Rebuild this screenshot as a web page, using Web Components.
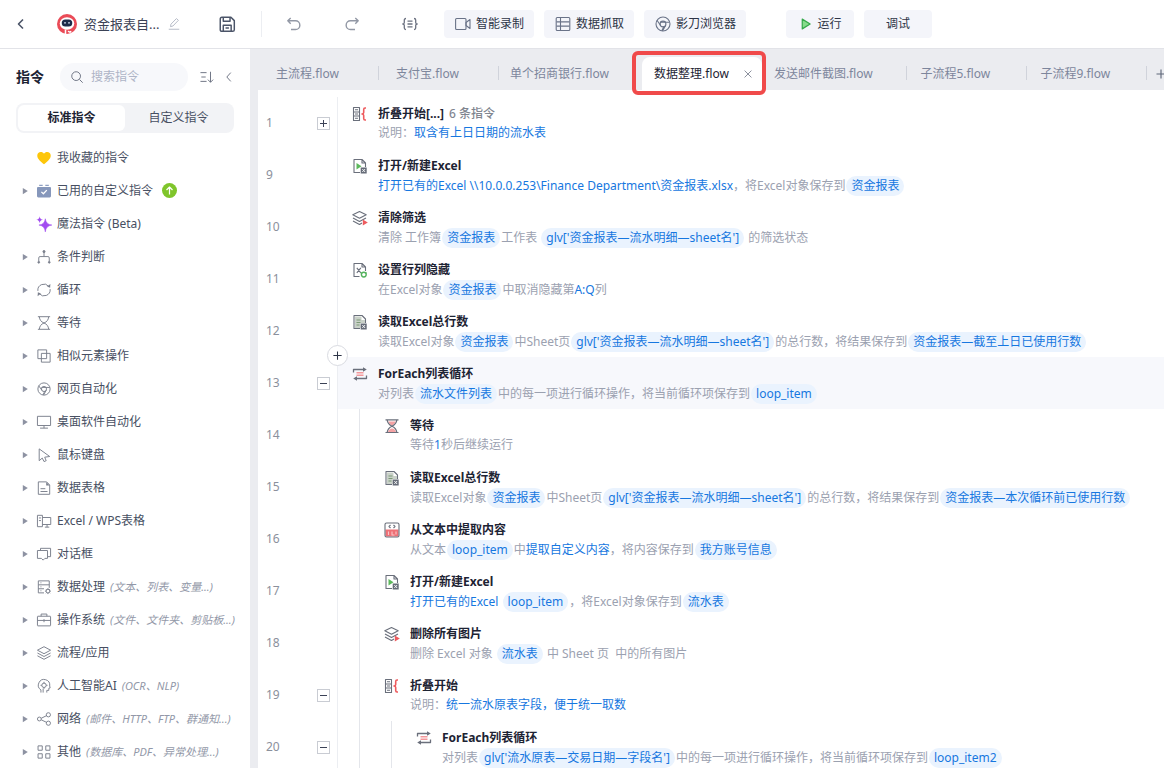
<!DOCTYPE html>
<html lang="zh-CN">
<head>
<meta charset="utf-8">
<meta name="viewport" content="width=device-width, initial-scale=1">
<title>资金报表自动化</title>
<style>
  html, body { height: 100%; }
  body {
    margin: 0;
    font: 12px/18px "Noto Sans", "Noto Sans CJK SC", sans-serif;
    color: #3b4256;
    background: #fff;
    --blue: #1677e0;
    --muted: #9ba1b0;
    --strip: #ebecf0;
    --line: #e6e8ee;
    --soft: #f4f5fa;
  }
</style>
</head>
<body>
<flow-studio></flow-studio>

<script>
const ICONS = {
  back: '<path d="M10 3.5 5.5 8l4.5 4.5" stroke-width="1.6"/>',
  chevron: '<path d="M10 3 5.5 8l4.5 5"/>',
  pencil: '<path d="M4 11 4.500 8.200l6.300-6.400 2.200 2L6.800 10.300zM2 14h12" />',
  save: '<path d="M2 3.500Q2 2 3.500 2h8L14.500 5v8q0 1.500-1.500 1.500H3.500Q2 14.500 2 13zM4.700 2v3.600h6V2M4.700 14.500V9.200h7v5.300M6.700 11.500h3" stroke-width="1.300"/>',
  undo: '<path d="M4.700 2 1.800 4.800l2.900 2.900M2 4.800h7.500a4.300 4.300 0 0 1 0 8.700H5" stroke-width="1.400"/>',
  redo: '<path d="m11.300 2 2.900 2.800-2.900 2.900M14 4.800H6.500a4.300 4.300 0 0 0 0 8.700H11" stroke-width="1.400"/>',
  braces: '<path d="M4 2.500Q2.300 2.500 2.300 4v2.500Q2.300 8 .8 8q1.500 0 1.500 1.500V12q0 1.500 1.700 1.500M12 2.500q1.700 0 1.700 1.500v2.500q0 1.500 1.500 1.500-1.500 0-1.500 1.500V12q0 1.500-1.700 1.500M5.500 5.200h5M5.500 8h5M5.500 10.800h5" stroke-width="1.300"/>',
  camera: '<rect x=".600" y="2.500" width="10.400" height="11" rx="1"/><path d="m11 6.500 4-3v9l-4-3z"/>',
  grid: '<rect x="1.200" y="1.500" width="13.600" height="13" rx="1"/><path d="M5.500 2v12M1.500 5.900h13M1.500 10.100h13"/>',
  chrome: '<circle cx="8" cy="8" r="7"/><circle cx="8" cy="8" r="2.900"/><path d="M5.300 6.200h9.300M5.600 9.500 2 4.300M8.800 10.700l-2 4.100M10.600 9.400 7.500 14.900"/>',
  play: '<path d="M3 1.500v13L13.500 8z" fill="#86dc8b" stroke="#35a94a" stroke-width="1.600"/>',
  search: '<circle cx="7" cy="7" r="5"/><path d="m10.800 10.800 3.700 3.700"/>',
  sort: '<path d="M.5 3h7M1.500 8h5M.5 13h7M12 2v12M9 11l3 3 3-3"/>',
  close: '<path d="m2.500 2.500 11 11M13.500 2.500l-11 11" stroke-width="1.400"/>',
  plus: '<path d="M8 2v12M2 8h12" stroke-width="1.500"/>',
  logo: '<circle cx="8" cy="8" r="8" fill="#ea4b57" stroke="none"/><ellipse cx="8" cy="7.600" rx="5.800" ry="5" fill="#fff" stroke="none"/><rect x="3.800" y="4.400" width="8.400" height="5.600" rx="2.800" fill="#1d2b4a" stroke="none"/><circle cx="6.400" cy="7" r=".7" fill="#d9e4f5" stroke="none"/><circle cx="9.600" cy="7" r=".7" fill="#d9e4f5" stroke="none"/><path d="M6.800 12.300V16M9 13.500q.5 1.500 2.500.5" stroke="#fff" stroke-width="1.200"/>',
  caret: '<path d="M4.500 3v10l8-5z" fill="currentColor" stroke="none"/>',
  up: '<circle cx="8" cy="8" r="8" fill="#7fc52b" stroke="none"/><path d="M8 12.300V4.500M4.800 7.500 8 4.300l3.200 3.200" stroke="#fff" stroke-width="1.300"/>',
  heart: '<path d="M8 15C5 12.500.3 9.200.3 5.300.3 2.600 2.200 1.200 4.200 1.200c1.700 0 3.100.8 3.800 1.900.7-1.100 2.100-1.900 3.800-1.900 2 0 3.900 1.400 3.900 4.100C15.700 9.200 11 12.500 8 15z" fill="#fdc60a" stroke="none"/>',
  box: '<path d="M2.500.8h4v1.400h-4zM9.500.8h4v1.400h-4z" fill="#8fa0c2" stroke="none"/><path d="M0 4.500Q0 3.300 1.200 3.300h13.600Q16 3.300 16 4.500v9.300q0 1.500-1.500 1.500h-13Q0 15.300 0 13.800z" fill="#8697bb" stroke="none"/><path d="m5 9 2.300 2.200L11.200 7" stroke="#fff" stroke-width="1.500"/>',
  magic: '<path d="M9.500 2Q10.200 8.500 17 9.200 10.200 10 9.500 17 8.800 10 2.200 9.200 8.800 8.500 9.500 2z" fill="#a24df0" stroke="#a24df0" stroke-width=".6"/><path d="M3-.8q.4 3.600 4 4Q3.400 3.600 3 7.200 2.600 3.600-1 3.200 2.600 2.800 3-.8z" fill="#a24df0" stroke="none"/>',
  branch: '<path d="M8 2v5.500M2 13V9q0-1.500 1.500-1.500h9q1.500 0 1.500 1.500v4"/><circle cx="8" cy="1.800" r="1.200" fill="currentColor"/><circle cx="2" cy="14" r="1" fill="currentColor"/><circle cx="14" cy="14" r="1" fill="currentColor"/>',
  cycle: '<path d="M1 9A7 7 0 0 1 13.500 4M15 7A7 7 0 0 1 2.500 12"/><path d="m15.300 1-.3 4.500-3.500-1.500zM.7 15l.3-4.500L4.500 12z" fill="currentColor" stroke="none"/>',
  glass: '<path d="M1 .8h14M1 15.200h14M2.700 1Q3 6 8 8q5-2 5.300-7M2.700 15Q3 10 8 8q5 2 5.300 7"/>',
  similar: '<rect x="1" y="1" width="10" height="10"/><rect x="5" y="5" width="10" height="10"/>',
  desktop: '<rect x=".5" y="1.500" width="15" height="10.500"/><path d="M8 12v3M3.500 15h9"/>',
  cursor: '<path d="M2.500 1v13.500l3.500-3 2 4 2.500-1-1.700-4L14.500 9.700z"/>',
  sheet: '<path d="M1.500 1H11L14.500 4.500V15.200h-13zM4 8.800h5.500M4 12h8"/><path d="M10.500 1V5h4z" fill="currentColor" stroke="none"/>',
  wps: '<path d="M.5 1.500h5.700v13H.5zM6.200 4h9.500v8H6.200M2.200 4.500h2.300M2.200 7.500h2.300M9 15h5M11.500 12v3"/>',
  dialog: '<path d="M.5 4h11.500v9H9L7 15 5 13H.5zM4 4v-2.500h11.500v9.500h-3"/>',
  dbgear: '<path d="M8 14.700H1.500V1H14v8M1.500 5.500H14M1.500 10H8M4 3.200h1M4 7.800h1M4 12.300h1"/><circle cx="12.500" cy="12.700" r="2.100"/><path d="M12.500 9.300v1.200M12.500 14.900v1.200M9.100 12.700h1.200M14.700 12.700h1.200M10.100 10.300l.9.900M14 14.200l.9.900M14.900 10.300l-.9.900M11 14.200l-.9.900"/>',
  brief: '<rect x=".5" y="3.700" width="15" height="11" rx=".5"/><path d="M4.700 3.700V1.200h6.600V3.700M.5 8.500h15M8 7v3.500"/>',
  layers: '<path d="m8 .8 7.500 4L8 8.800.5 4.800zM.5 8 8 12l7.500-4M.5 11.200 8 15.200l7.500-4"/>',
  brain: '<path d="M4.500 15.500v-3A6.500 6.500 0 1 1 14.500 8l.5 2.200-1.500.4v2.400h-2.300v2.500"/><circle cx="8" cy="7.200" r="2.500"/><path d="M8 3.200v1.500M8 9.700v1.500M4 7.200h1.500M10.500 7.200H12M7 11v4.500"/>',
  share: '<circle cx="2.700" cy="8" r="2.200"/><circle cx="13" cy="3.200" r="2.400"/><circle cx="13" cy="12.800" r="2.400"/><path d="m4.800 7.200 6-3M4.800 8.900l6 2.900"/>',
  apps: '<rect x="1.200" y="1" width="4.800" height="5"/><rect x="10" y="1" width="4.800" height="5"/><rect x="1.200" y="10" width="4.800" height="5"/><rect x="10" y="10" width="4.800" height="5"/>',
  's-fold': '<path d="M1.500 1.500h6v13h-6zM1.500 6h6M1.500 10h6M3 3.800h3M3 8h3M3 12.200h3"/><path d="M14 2h-1q-1.300 0-1.300 1.500v3Q11.700 8 10 8q1.700 0 1.700 1.500v3q0 1.500 1.300 1.500h1" stroke="#ee5b5e" stroke-width="1.600"/>',
  's-open': '<path d="M8 14.500H2v-13h8L13.500 5v4M10 1.500V5h3.500"/><path d="M4.500 5v6.500L9.500 8.200z" fill="#5cb85c" stroke="none"/><rect x="8.700" y="9.500" width="6" height="6" fill="#666c78" stroke="none"/><path d="m10.300 11 2.800 3M13.100 11l-2.800 3" stroke="#fff" stroke-width=".9"/>',
  's-layers': '<path d="m7.500 1.500 6.700 3.300-6.700 3.400L.8 4.800zM1 8l6.500 3.500L14 8M1 11l6.500 3.500L10 13"/><path d="M10.800 9.500v6L15.800 12.500z" fill="#ee5b5e" stroke="none"/>',
  's-hide': '<path d="M7.500 14.500H2v-13h8L13.500 5v4M10 1.500V5h3.500M4.800 5.800l4 5M8.800 5.800l-4 5"/><circle cx="11.800" cy="12.600" r="2.400" stroke="#55b35e" stroke-width="1.400"/><path d="m8.500 10.500 1.200.8M14.500 10.500l-.8.8" stroke="#55b35e"/>',
  's-read': '<path d="M8 14.500H2v-13h8L13.500 5v4"/><path d="M3 2.500h6.500V6H13v3H8.500v5H3z" fill="#c9d1c8" stroke="none"/><path d="M4.500 6h4M4.500 8.500h4M4.500 11h3" stroke="#7d9a77"/><rect x="8.700" y="9.500" width="6" height="6" fill="#666c78" stroke="none"/><path d="m10.300 11 2.800 3M13.100 11l-2.800 3" stroke="#fff" stroke-width=".9"/>',
  's-loop': '<path d="M1.500 6.500V3.500h10M14.500 9.500v3h-10" stroke-width="1.300"/><path d="M11 1.300v4.400L14.800 3.500zM5 10.300v4.400L1.200 12.500z" fill="currentColor" stroke="none"/><path d="M4.500 6.500h7M4.500 8h7M4.500 9.500h7" stroke="#f3989b" stroke-width="1"/>',
  's-wait': '<path d="M4 3.500h8Q11 6 8 7.500 5 6 4 3.500zM4 14q1-3.500 4-3.500t4 3.500z" fill="#f4a2a4" stroke="none"/><path d="M1.500 1.800h13M1.500 14.500h13M3.200 2Q3.500 6 8 8.200 12.500 6 12.800 2M3.200 14.500Q3.500 10.300 8 8.200q4.500 2.100 4.800 6.300" stroke-width="1.200"/>',
  's-text': '<path d="M1.500 7.500h13V14q0 .5-.5.5H2q-.5 0-.5-.5z" fill="#ef7076" stroke="none"/><rect x="1" y="1" width="14" height="14" rx="1.500"/><path d="M6.500 3 5 4.500 6.500 6M9.500 3 11 4.500 9.500 6"/><path d="M4.500 9.500v3.500M8 9.500v3.500h2.500M12 9.500v3" stroke="#f9c6c8"/>'
};

function define(name, html, setup) {
  const tpl = document.createElement('template');
  tpl.innerHTML = html.trim();
  customElements.define(name, class extends HTMLElement {
    constructor() {
      super();
      this.attachShadow({ mode: 'open' }).append(tpl.content.cloneNode(true));
    }
    connectedCallback() {
      if (setup && !this.ready) { this.ready = true; setup(this, this.shadowRoot); }
    }
  });
}

define('ui-icon', `
<style>
  :host { display: inline-flex; flex: none; width: var(--size, 16px); height: var(--size, 16px); }
  svg { width: 100%; height: 100%; overflow: visible; fill: none; stroke: currentColor; stroke-width: 1.1; stroke-linejoin: round; }
</style>
<svg viewBox="0 0 16 16" aria-hidden="true"></svg>`,
(el, root) => { root.querySelector('svg').innerHTML = ICONS[el.getAttribute('name')] || ''; });

/* Icon-only button */
define('icon-button', `
<style>
  :host { display: inline-flex; flex: none; }
  button { display: flex; margin: 0; padding: 0; border: 0; background: none; color: inherit; cursor: pointer; }
</style>
<button type="button"><ui-icon></ui-icon></button>`,
(el, root) => {
  root.querySelector('button').setAttribute('aria-label', el.getAttribute('label'));
  const icon = document.createElement('ui-icon');
  icon.setAttribute('name', el.getAttribute('icon'));
  root.querySelector('ui-icon').replaceWith(icon);
});

/* Filled toolbar button */
define('tool-button', `
<style>
  :host { display: inline-flex; flex: none; color: #2d3446; }
  button { display: flex; align-items: center; justify-content: center; gap: var(--gap, 4px); height: 28px; min-width: 68px; margin: 0; padding: 0 10px; border: 0; border-radius: 4px; background: var(--soft); color: inherit; font: inherit; cursor: pointer; white-space: nowrap; }
  ::slotted(ui-icon) { color: #6a7388; margin: 0 1px; }
</style>
<button type="button"><slot name="icon"></slot><slot></slot></button>`);

define('top-bar', `
<style>
  :host { display: flex; align-items: center; height: 48px; border-bottom: 1px solid #e2e3e8; background: #fff; color: #4b5468; }
  .project { display: flex; align-items: center; width: 192px; padding-left: 13px; }
  .logo { --size: 20px; margin: 0 7px 0 28px; }
  h1 { flex: 1; margin: 0; font-size: 13px; font-weight: 400; line-height: 20px; color: #3b4256; white-space: nowrap; }
  .edit { --size: 14px; color: #b4b9c6; margin-right: 24px; }
  .history { display: flex; align-items: center; gap: 42px; margin-left: 25px; padding-left: 24px; border-left: 1px solid #eceef2; height: 26px; color: #9298a5; }
  .vars { color: #6b7180; --size: 16px; }
  .save { margin-left: 13px; --size: 18px; }
  .tools, .run { display: flex; gap: 10px; }
  .tools { margin-left: 26px; }
  .run { margin-left: 40px; }
  .play { --size: 12px; --gap: 5px; }
</style>
<div class="project">
  <icon-button icon="back" label="返回"></icon-button>
  <ui-icon class="logo" name="logo"></ui-icon>
  <h1>资金报表自...</h1>
  <icon-button class="edit" icon="pencil" label="重命名"></icon-button>
</div>
<icon-button class="save" icon="save" label="保存"></icon-button>
<div class="history">
  <icon-button icon="undo" label="撤销"></icon-button>
  <icon-button icon="redo" label="重做"></icon-button>
  <icon-button class="vars" icon="braces" label="变量"></icon-button>
</div>
<div class="tools">
  <tool-button><ui-icon slot="icon" name="camera"></ui-icon>智能录制</tool-button>
  <tool-button><ui-icon slot="icon" name="grid"></ui-icon>数据抓取</tool-button>
  <tool-button><ui-icon slot="icon" name="chrome"></ui-icon>影刀浏览器</tool-button>
</div>
<div class="run">
  <tool-button class="play"><ui-icon slot="icon" name="play"></ui-icon>运行</tool-button>
  <tool-button>调试</tool-button>
</div>`);

/* One entry of the command tree */
define('command-item', `
<style>
  :host { display: block; }
  button { display: flex; align-items: center; width: 100%; height: 33px; margin: 0; padding: 0 0 0 20px; border: 0; background: none; font: inherit; color: #474f62; text-align: left; white-space: nowrap; cursor: pointer; }
  .caret { --size: 10px; color: #8d92a2; margin-right: 7px; }
  :host([leaf]) .caret { visibility: hidden; }
  .icon { --size: 14px; color: #7b808d; margin-right: 6px; }
  ::slotted(i) { margin-left: 5px; font-size: 11px; color: #9298a8; }
  ::slotted(ui-icon) { --size: 15px; margin-left: 9px; }
</style>
<button type="button"><ui-icon class="caret" name="caret"></ui-icon><span class="mark"></span><span><slot></slot></span><slot name="extra"></slot></button>`,
(el, root) => {
  const icon = document.createElement('ui-icon');
  icon.className = 'icon';
  icon.setAttribute('name', el.getAttribute('icon'));
  root.querySelector('.mark').replaceWith(icon);
});

define('command-panel', `
<style>
  :host { display: flex; flex-direction: column; box-sizing: border-box; min-height: 0; padding-top: 14px; background: #fff; }
  header { display: flex; align-items: center; padding: 0 14px 0 16px; color: #6c7282; --size: 14px; }
  h2 { margin: 0 16px 0 0; font-size: 14px; line-height: 20px; color: #1d2333; }
  label { display: flex; flex: 1; align-items: center; gap: 7px; min-width: 0; height: 28px; margin-right: 12px; padding: 0 10px; box-sizing: border-box; border-radius: 14px; background: #f7f8fb; }
  input { width: 100%; min-width: 0; margin: 0; padding: 0; border: 0; outline: 0; background: none; font: inherit; color: #3b4256; }
  input::placeholder { color: #aeb4c6; opacity: 1; }
  .sort { margin-right: 8px; }
  .switch { display: flex; margin: 12px 16px 8px; padding: 2px; border-radius: 8px; background: #f2f3f6; }
  .switch button { flex: 1; height: 26px; margin: 0; padding: 0; border: 0; border-radius: 6px; background: none; font: inherit; color: #474f62; cursor: pointer; }
  .switch button[aria-selected=true] { background: #fff; font-weight: 700; color: #1d2333; }
  nav { flex: 1; min-height: 0; overflow: auto; scrollbar-width: none; }
</style>
<header>
  <h2>指令</h2>
  <label><ui-icon name="search"></ui-icon><input type="text" placeholder="搜索指令" aria-label="搜索指令"></label>
  <icon-button class="sort" icon="sort" label="排序"></icon-button>
  <icon-button icon="chevron" label="收起"></icon-button>
</header>
<div class="switch" role="tablist">
  <button type="button" role="tab" aria-selected="true">标准指令</button>
  <button type="button" role="tab" aria-selected="false">自定义指令</button>
</div>
<nav>
  <command-item leaf icon="heart">我收藏的指令</command-item>
  <command-item icon="box">已用的自定义指令<ui-icon slot="extra" name="up"></ui-icon></command-item>
  <command-item leaf icon="magic">魔法指令 (Beta)</command-item>
  <command-item icon="branch">条件判断</command-item>
  <command-item icon="cycle">循环</command-item>
  <command-item icon="glass">等待</command-item>
  <command-item icon="similar">相似元素操作</command-item>
  <command-item icon="chrome">网页自动化</command-item>
  <command-item icon="desktop">桌面软件自动化</command-item>
  <command-item icon="cursor">鼠标键盘</command-item>
  <command-item icon="sheet">数据表格</command-item>
  <command-item icon="wps">Excel / WPS表格</command-item>
  <command-item icon="dialog">对话框</command-item>
  <command-item icon="dbgear">数据处理<i slot="extra">(文本、列表、变量...)</i></command-item>
  <command-item icon="brief">操作系统<i slot="extra">(文件、文件夹、剪贴板...)</i></command-item>
  <command-item icon="layers">流程/应用</command-item>
  <command-item icon="brain">人工智能AI<i slot="extra">(OCR、NLP)</i></command-item>
  <command-item icon="share">网络<i slot="extra">(邮件、HTTP、FTP、群通知...)</i></command-item>
  <command-item icon="apps">其他<i slot="extra">(数据库、PDF、异常处理...)</i></command-item>
</nav>`);

define('flow-tab', `
<style>
  :host { display: flex; flex: none; position: relative; align-items: center; box-sizing: border-box; min-width: 120px; height: 33px; padding: 0 4px 0 12px; color: #7d869c; }
  button { margin: 0; padding: 0; border: 0; background: none; font: inherit; color: inherit; cursor: pointer; white-space: nowrap; }
  .name { flex: 1; margin-right: 9px; text-align: center; }
  .close { display: flex; justify-content: center; width: 20px; --size: 10px; visibility: hidden; color: #7b8190; }
  .bar { position: absolute; right: -1px; top: 9px; width: 1px; height: 14px; background: #d0d3db; }
  :host([active]) { background: #fff; border-radius: 8px 8px 0 0; color: #1d2333; }
  :host([active]) .close { visibility: visible; }
  :host([active]) .bar, :host([plain]) .bar { display: none; }
  .frame { display: none; }
  :host([active]) .frame { display: block; position: absolute; inset: -6px -4px -5px -10px; border: 4px solid #f04a4a; border-radius: 6px; pointer-events: none; z-index: 3; }
</style>
<button type="button" class="name" role="tab"><slot></slot></button>
<button type="button" class="close" aria-label="关闭"><ui-icon name="close"></ui-icon></button>
<span class="bar"></span><span class="frame"></span>`);

define('tab-strip', `
<style>
  :host { display: flex; align-items: flex-end; position: relative; z-index: 2; height: 41px; background: var(--strip); }
  .add { align-self: center; margin: 9px 0 0 9px; color: #5e6678; --size: 12px; }
</style>
<slot></slot><icon-button class="add" icon="plus" label="新建流程"></icon-button>`);

/* Variable reference */
define('var-chip', `
<style>
  :host { display: inline-block; margin: 0 1px; padding: 0 5px; border-radius: 10px; background: #eaf3fe; color: var(--blue); line-height: 20px; white-space: nowrap; }
</style><slot></slot>`);

/* One numbered instruction; level = nesting depth, fold = plus | minus */
define('flow-step', `
<style>
  :host { display: flex; height: 52px; }
  .gutter { display: flex; flex: none; position: relative; align-items: center; justify-content: space-between; box-sizing: border-box; width: 80px; padding: 0 7px 0 8px; border-right: 1px solid #eceef2; color: #8b909c; }
  .fold { display: none; box-sizing: border-box; width: 13px; height: 13px; margin: 0; padding: 0; border: 1px solid #c9ccd3; background: #fff; color: #3b4256; cursor: pointer; align-items: center; justify-content: center; }
  :host([fold]) .fold { display: flex; }
  .add { display: none; position: absolute; top: -12px; right: -11px; box-sizing: border-box; width: 21px; height: 21px; margin: 0; padding: 0; border: 1px solid #d9dbe1; border-radius: 50%; background: #fff; color: #2d3446; cursor: pointer; --size: 11px; align-items: center; justify-content: center; z-index: 1; }
  :host([selected]) .add { display: flex; }
  .row { display: flex; flex: 1; min-width: 0; }
  :host([selected]) .row { background: #f7f8fc; }
  .guide { flex: none; width: 21px; margin-right: 10px; border-right: 1px solid #e4e6eb; }
  .body { display: flex; gap: 10px; padding: 8px 0 0 14px; min-width: 0; }
  .icon { margin-top: 1px; color: #6a6f7b; }
  .title { font-weight: 700; color: #1d2333; white-space: nowrap; }
  .desc { margin-top: 1px; color: var(--muted); white-space: pre; }
  ::slotted(b) { font-weight: 400; color: var(--blue); }
  ::slotted(span) { margin-left: 5px; font-weight: 500; color: #80858f; }
</style>
<div class="gutter"><span class="no"></span>
  <button type="button" class="fold" aria-label="折叠或展开"></button>
  <button type="button" class="add" aria-label="插入指令"><ui-icon name="plus"></ui-icon></button>
</div>
<div class="row"><div class="body">
  <span class="mark"></span>
  <div><div class="title"><slot name="title"></slot></div><div class="desc"><slot></slot></div></div>
</div></div>`,
(el, root) => {
  const $ = s => root.querySelector(s);
  const icon = document.createElement('ui-icon');
  icon.className = 'icon';
  icon.setAttribute('name', el.getAttribute('icon'));
  $('.mark').replaceWith(icon);
  $('.no').textContent = el.getAttribute('line');
  const plus = el.getAttribute('fold') === 'plus';
  $('.fold').innerHTML = '<svg width="9" height="9" viewBox="0 0 9 9" stroke="currentColor"><path d="M1 4.5h7' + (plus ? 'M4.5 1v7' : '') + '"/></svg>';
  for (let i = 0; i < +(el.getAttribute('level') || 0); i++) {
    const g = document.createElement('span');
    g.className = 'guide';
    $('.row').prepend(g);
  }
});

define('flow-editor', `
<style>
  :host { display: block; min-width: 0; min-height: 0; padding-top: 7px; background: #fff; overflow: auto; scrollbar-width: none; }
  i { font-style: normal; font-weight: 700; }
</style>
<flow-step line="1" icon="s-fold" fold="plus"><i slot="title">折叠开始[...]</i><span slot="title">6 条指令</span>说明：<b>取含有上日日期的流水表</b></flow-step>
<flow-step line="9" icon="s-open"><i slot="title">打开/新建Excel</i><b>打开已有的Excel \\\\10.0.0.253\\Finance Department\\资金报表.xlsx</b>，将Excel对象保存到<var-chip>资金报表</var-chip></flow-step>
<flow-step line="10" icon="s-layers"><i slot="title">清除筛选</i>清除 工作簿<var-chip>资金报表</var-chip>工作表 <var-chip>glv['资金报表—流水明细—sheet名']</var-chip> 的筛选状态</flow-step>
<flow-step line="11" icon="s-hide"><i slot="title">设置行列隐藏</i>在Excel对象<var-chip>资金报表</var-chip>中取消隐藏第<b>A:Q</b>列</flow-step>
<flow-step line="12" icon="s-read"><i slot="title">读取Excel总行数</i>读取Excel对象<var-chip>资金报表</var-chip>中Sheet页<var-chip>glv['资金报表—流水明细—sheet名']</var-chip>的总行数，将结果保存到<var-chip>资金报表—截至上日已使用行数</var-chip></flow-step>
<flow-step line="13" icon="s-loop" fold="minus" selected><i slot="title">ForEach列表循环</i>对列表<var-chip>流水文件列表</var-chip>中的每一项进行循环操作，将当前循环项保存到<var-chip>loop_item</var-chip></flow-step>
<flow-step line="14" level="1" icon="s-wait"><i slot="title">等待</i>等待<b>1</b>秒后继续运行</flow-step>
<flow-step line="15" level="1" icon="s-read"><i slot="title">读取Excel总行数</i>读取Excel对象<var-chip>资金报表</var-chip>中Sheet页<var-chip>glv['资金报表—流水明细—sheet名']</var-chip>的总行数，将结果保存到<var-chip>资金报表—本次循环前已使用行数</var-chip></flow-step>
<flow-step line="16" level="1" icon="s-text"><i slot="title">从文本中提取内容</i>从文本<var-chip>loop_item</var-chip>中<b>提取自定义内容</b>，将内容保存到<var-chip>我方账号信息</var-chip></flow-step>
<flow-step line="17" level="1" icon="s-open"><i slot="title">打开/新建Excel</i><b>打开已有的Excel</b> <var-chip>loop_item</var-chip>，将Excel对象保存到<var-chip>流水表</var-chip></flow-step>
<flow-step line="18" level="1" icon="s-layers"><i slot="title">删除所有图片</i>删除 Excel 对象 <var-chip>流水表</var-chip> 中 Sheet 页  中的所有图片</flow-step>
<flow-step line="19" level="1" icon="s-fold" fold="minus"><i slot="title">折叠开始</i>说明：<b>统一流水原表字段，便于统一取数</b></flow-step>
<flow-step line="20" level="2" icon="s-loop" fold="minus"><i slot="title">ForEach列表循环</i>对列表<var-chip>glv['流水原表—交易日期—字段名']</var-chip>中的每一项进行循环操作，将当前循环项保存到<var-chip>loop_item2</var-chip></flow-step>`);

define('flow-studio', `
<style>
  :host { display: flex; flex-direction: column; height: 100vh; overflow: hidden; }
  .work { display: grid; grid-template-columns: 250px minmax(0, 1fr); flex: 1; min-height: 0; }
  main { display: grid; grid-template-rows: auto minmax(0, 1fr); min-width: 0; min-height: 0; padding-left: 8px; background: var(--strip); overflow: hidden; }
</style>
<top-bar></top-bar>
<div class="work">
  <command-panel></command-panel>
  <main>
    <tab-strip role="tablist">
      <flow-tab>主流程.flow</flow-tab>
      <flow-tab>支付宝.flow</flow-tab>
      <flow-tab plain>单个招商银行.flow</flow-tab>
      <flow-tab active>数据整理.flow</flow-tab>
      <flow-tab>发送邮件截图.flow</flow-tab>
      <flow-tab>子流程5.flow</flow-tab>
      <flow-tab>子流程9.flow</flow-tab>
    </tab-strip>
    <flow-editor></flow-editor>
  </main>
</div>`);
</script>
</body>
</html>
